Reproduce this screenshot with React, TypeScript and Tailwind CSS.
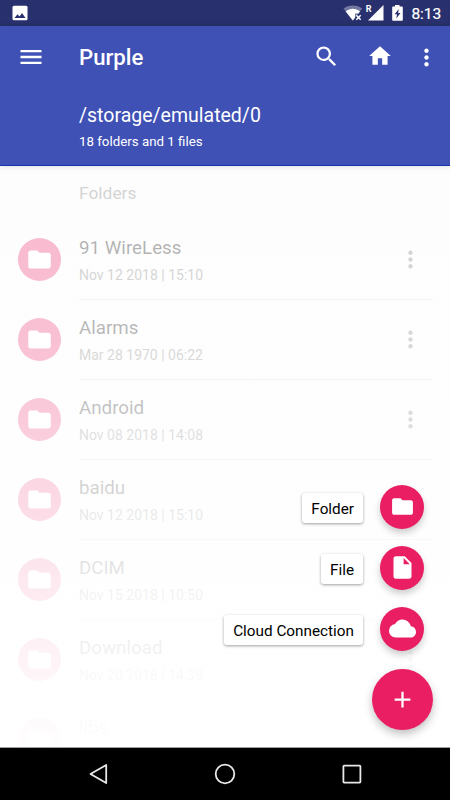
import React from 'react';
import {
  MdAdd,
  MdCloud,
  MdFolder,
  MdHome,
  MdInsertDriveFile,
  MdMenu,
  MdMoreVert,
  MdSearch,
} from 'react-icons/md';

const folders = [
  { name: '91 WireLess', date: 'Nov 12 2018 | 15:10' },
  { name: 'Alarms', date: 'Mar 28 1970 | 06:22' },
  { name: 'Android', date: 'Nov 08 2018 | 14:08' },
  { name: 'baidu', date: 'Nov 12 2018 | 15:10' },
  { name: 'DCIM', date: 'Nov 15 2018 | 10:50' },
  { name: 'Download', date: 'Nov 20 2018 | 14:39' },
  { name: 'libs', date: '' },
];

const actions = [
  { label: 'Folder', icon: <MdFolder className="w-[25px] h-[25px]" /> },
  { label: 'File', icon: <MdInsertDriveFile className="w-[27px] h-[27px]" /> },
  { label: 'Cloud Connection', icon: <MdCloud className="w-[27px] h-[27px]" /> },
];

const StatusBar = () => (
  <div className="h-[26px] shrink-0 bg-[#28316d] flex items-center justify-between pl-3 pr-[9px] text-white">
    <svg className="w-4 h-4" viewBox="0 0 16 16">
      <rect x="0.5" y="0.8" width="15" height="14.5" rx="1.5" fill="#fff" />
      <path d="M2.5 13 5.5 9.3l2 2.3L10 8.1l3.5 4.9z" fill="#28316d" />
    </svg>

    <div className="flex items-center">
      {/* Wifi without internet */}
      <svg className="w-[20px] h-4" viewBox="0 0 20 16">
        <path d="M0.5 3.6C5.5-.4 14.2-.4 19.2 3.6L9.8 15.5z" fill="#fff" opacity="0.35" />
        <path d="M2.7 6.4C7 3 12.7 3 17 6.4L15.5 8.6H12v4.1L9.8 15.5z" fill="#fff" />
        <path d="M13.3 10.3l4.4 4.4M17.7 10.3l-4.4 4.4" stroke="#fff" strokeWidth="1.5" />
      </svg>
      <span className="text-[9px] leading-[8px] font-bold ml-[3px] -mt-[9px]">R</span>
      <svg className="w-[16px] h-4 -ml-[4px]" viewBox="0 0 16 16">
        <path d="M0 15.5 15.5 0v15.5z" fill="#fff" />
      </svg>
      <svg className="w-[11px] h-4 ml-[8.5px]" viewBox="0 0 11 16">
        <path d="M3 0h4.5v1.5H10a.8.8 0 0 1 .8.8V15a.8.8 0 0 1-.8.8H1A.8.8 0 0 1 .2 15V2.3A.8.8 0 0 1 1 1.5h2z" fill="#fff" />
        <path d="M6.8 4 2.6 9.300H5L4.300 13.500 8.500 8H6.100z" fill="#28316d" />
      </svg>
      <span className="text-[15.5px] leading-5 tracking-[-0.1px] ml-[8.5px] mt-[2px] [-webkit-text-stroke:0.2px_white]">8:13</span>
    </div>
  </div>
);

const Header = () => (
  <header className="relative z-10 h-[140px] shrink-0 bg-[#3f51b5] border-b border-[#1735b0] text-white shadow-[0_1px_5px_rgba(0,0,0,0.35)]">
    <div className="h-[62px] flex items-center pl-[17px] pr-[10px]">
      <MdMenu className="w-[28px] h-[28px]" />
      <h1 className="ml-[34px] mt-[2px] flex-1 text-[22.2px] font-medium">Purple</h1>
      <MdSearch className="w-[27px] h-[27px] mr-[27px] -mt-[2px]" />
      <MdHome className="w-[26px] h-[26px] mr-[20px] -mt-[2px]" />
      <MdMoreVert className="w-[27px] h-[27px]" />
    </div>
    <div className="pl-[79px]">
      <p className="text-[19.5px] leading-6 mt-[16px]">/storage/emulated/0</p>
      <p className="text-[13.3px] leading-5 mt-[4px]">18 folders and 1 files</p>
    </div>
  </header>
);

const FolderRow = ({ name, date }: { name: string; date: string }) => (
  <li className="h-20 shrink-0 flex pl-[17.5px] pr-[17px]">
    <div className="w-[44.5px] pb-px flex items-center">
      <span className="w-[43.5px] h-[43.5px] rounded-full bg-[#e91e63] flex items-center justify-center text-white">
        <MdFolder className="w-[27px] h-[27px]" />
      </span>
    </div>
    <div className="ml-[17px] flex-1 flex items-center justify-between border-b border-[#d4d4d4]">
      <div className="pt-[2px]">
        <p className="text-[18.75px] leading-6 text-black">{name}</p>
        <p className="text-[14px] leading-5 mt-[5px] h-5 text-[#6f6f6f]">{date}</p>
      </div>
      <MdMoreVert className="w-[27px] h-[27px] mr-[9px] text-[#6f6f6f]" />
    </div>
  </li>
);

const SpeedDial = () => (
  <div className="absolute z-20 right-[17px] bottom-[17px] flex flex-col items-end">
    {actions.map(({ label, icon }) => (
      <div key={label} className="h-[61px] flex items-center pr-[9px]">
        <span className="h-[30px] px-[9px] mr-[17px] mt-[3px] rounded-[3px] bg-white text-black text-[15.3px] leading-[32px] shadow-[0_1px_3px_rgba(0,0,0,0.38)]">
          {label}
        </span>
        <button className="w-[44px] h-[44px] rounded-full bg-[#e91e63] text-white flex items-center justify-center shadow-[0_4px_7px_rgba(0,0,0,0.2)]">
          {icon}
        </button>
      </div>
    ))}
    <button className="mt-[10px] w-[61px] h-[61px] rounded-full bg-[#e91e63] text-white flex items-center justify-center shadow-[0_4px_8px_rgba(0,0,0,0.25)]">
      <MdAdd className="w-[27px] h-[27px]" />
    </button>
  </div>
);

const NavigationBar = () => (
  <nav className="h-[53px] shrink-0 bg-black border-t border-[#a0a0a0] flex items-center justify-between pl-[87px] pr-[87px]">
    <svg className="w-[22px] h-[22px]" viewBox="0 0 22 22" fill="none" stroke="#e8e8e8" strokeWidth="1.8">
      <path d="M3.5 11 19.2 2v18z" strokeLinejoin="round" />
    </svg>
    <svg className="w-[22px] h-[22px]" viewBox="0 0 22 22" fill="none" stroke="#e8e8e8" strokeWidth="1.8">
      <circle cx="11" cy="11" r="9.3" />
    </svg>
    <svg className="w-[22px] h-[22px]" viewBox="0 0 22 22" fill="none" stroke="#e8e8e8" strokeWidth="1.8">
      <rect x="2.4" y="2.6" width="17" height="17" rx="0.8" />
    </svg>
  </nav>
);

const App = () => {
  return (
    <div className="w-[450px] h-[800px] flex flex-col overflow-hidden bg-white font-['Roboto',sans-serif]">
      <StatusBar />
      <Header />
      <main className="relative flex-1 min-h-0">
        <div className="h-full overflow-hidden bg-[#fafafa]">
          <h2 className="h-[53px] pl-[79px] pt-[15px] mb-px text-[17.4px] leading-6 text-[#757575]">Folders</h2>
          <ul className="flex flex-col">
            {folders.map((folder) => (
              <FolderRow key={folder.name} name={folder.name} date={folder.date} />
            ))}
          </ul>
        </div>

        {/* Scrim behind the open speed dial */}
        <div className="absolute inset-0 z-10 bg-[linear-gradient(to_bottom,rgba(255,255,255,0.68)_0px,rgba(255,255,255,0.7)_94px,rgba(255,255,255,0.72)_174px,rgba(255,255,255,0.77)_254px,rgba(255,255,255,0.835)_334px,rgba(255,255,255,0.9)_414px,rgba(255,255,255,0.95)_494px,rgba(255,255,255,0.982)_550px,rgba(255,255,255,0.995)_581px)]" />

        <SpeedDial />
      </main>
      <NavigationBar />
    </div>
  );
};

export default App;
